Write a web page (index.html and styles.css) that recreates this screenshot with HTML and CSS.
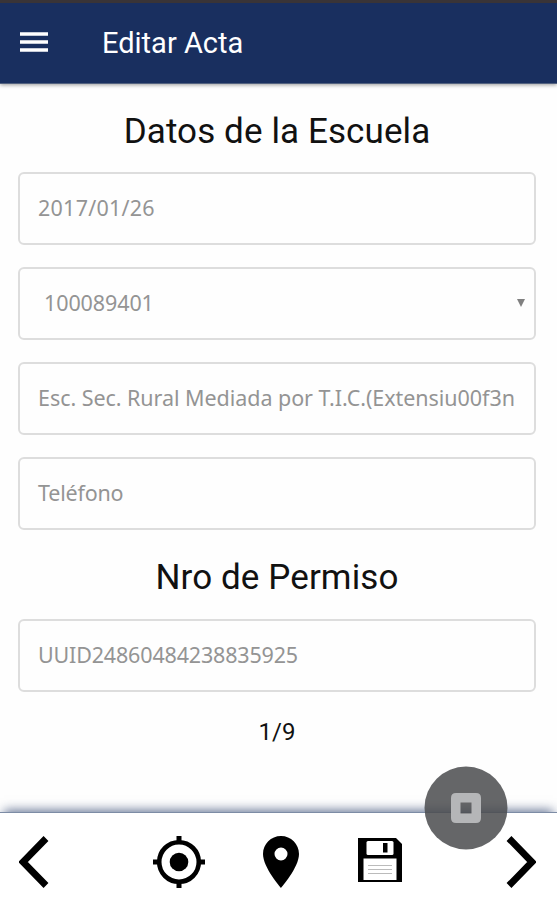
FILE: index.html
```html
<!DOCTYPE html>
<html lang="es">
<head>
<meta charset="utf-8">
<title>Editar Acta</title>
<link rel="stylesheet" href="styles.css">
</head>
<body>
<div class="app">
  <header class="topbar">
    <svg class="menu" viewBox="0 0 28 20"><path d="M0 2H28M0 10H28M0 18H28" stroke="#fff" stroke-width="3.4"/></svg>
    <h1 class="title">Editar Acta</h1>
  </header>
  <main class="form">
    <h2 class="heading">Datos de la Escuela</h2>
    <div class="field date">2017/01/26</div>
    <div class="field select"><span>100089401</span><svg class="caret" viewBox="0 0 8 8"><path d="M0 0H8L4 8Z" fill="#808080"/></svg></div>
    <div class="field school">Esc. Sec. Rural Mediada por T.I.C.(Extensiu00f3n</div>
    <div class="field phone">Teléfono</div>
    <h2 class="heading permit">Nro de Permiso</h2>
    <div class="field uuid">UUID24860484238835925</div>
    <p class="page">1/9</p>
  </main>
  <footer class="toolbar">
    <svg class="icon prev" viewBox="0 0 30 52"><path d="M27 2.5L4 26L27 49.5" fill="none" stroke="#000" stroke-width="6.8"/></svg>
    <svg class="icon target" viewBox="0 0 52 52"><circle cx="26" cy="26" r="19.8" fill="none" stroke="#000" stroke-width="4.6"/><circle cx="26" cy="26" r="9.3"/><path d="M26 0V7M26 45V52M0 26H7M45 26H52" stroke="#000" stroke-width="5"/></svg>
    <svg class="icon pin" viewBox="0 0 36 52"><path fill-rule="evenodd" d="M18 0C8 0 0 8 0 18C0 31.500 18 52 18 52S36 31.500 36 18C36 8 28 0 18 0ZM18 11.500A6.500 6.500 0 1 1 18 24.500A6.500 6.500 0 1 1 18 11.500Z"/></svg>
    <svg class="icon save" viewBox="0 0 44 44"><path d="M0 0H38L44 6V44H0Z"/><rect x="8.500" y="3" width="27" height="14" rx="1.500" fill="#fff"/><rect x="25" y="5" width="4.500" height="9.500"/><rect x="5.500" y="20.500" width="33" height="21.500" fill="#fff"/><path d="M10 27.500H34M10 31.500H34M10 35.500H34" stroke="#bbb" stroke-width="1.200"/></svg>
    <svg class="icon next" viewBox="0 0 30 52"><path d="M3 2.500L26 26L3 49.500" fill="none" stroke="#000" stroke-width="6.8"/></svg>
  </footer>
  <svg class="bubble" viewBox="0 0 84 84"><circle cx="42" cy="42" r="41.500" fill="#4a4b4d" fill-opacity=".85"/><path fill-rule="evenodd" fill="#b5b6b8" d="M32 27H52Q57 27 57 32V52Q57 57 52 57H32Q27 57 27 52V32Q27 27 32 27ZM36.500 36.500V47.500H47.500V36.500Z"/></svg>
</div>
</body>
</html>
```
FILE: styles.css
```css
* { box-sizing: border-box; }
body { margin: 0; background: #fefefe; color: #111; font-family: Roboto, sans-serif; }
.app { position: relative; width: 557px; height: 900px; display: flex; flex-direction: column; overflow: hidden; }
.topbar { height: 84px; flex: none; display: flex; align-items: center; padding: 0 20px 2px; background: #192f5f; border-top: 3px solid #393437; border-bottom: 1px solid #52617f; box-shadow: 0 1px 4px rgba(0,0,0,.4); }
.menu { width: 28px; height: 20px; margin-right: 54px; }
.title { margin: 0; font-size: 29px; font-weight: 400; line-height: 34px; color: #fff; padding-top: 1px; }
.form { flex: 1; padding: 24px 21px 0 18px; display: flex; flex-direction: column; }
.heading { margin: 0 0 16px; height: 48px; line-height: 48px; text-align: center; font-size: 35px; font-weight: 400; letter-spacing: .1px; }
.field { height: 73px; flex: none; margin-bottom: 22px; padding: 0 18px 2px; border: 2px solid #ddd; border-radius: 6px; display: flex; align-items: center; white-space: nowrap; overflow: hidden; font-family: "Noto Sans", sans-serif; font-size: 21.5px; color: #949494; }
.date { letter-spacing: .25px; }
.school { letter-spacing: -.05px; }
.phone { letter-spacing: -.2px; }
.uuid { letter-spacing: -.17px; }
.select { padding: 0 9px 2px 24px; justify-content: space-between; letter-spacing: -.1px; }
.caret { width: 8px; height: 8px; }
.permit { margin: 2px 0 17px; }
.page { margin: 4px 0 0; text-align: center; font-size: 24px; line-height: 28px; }
.toolbar { position: relative; height: 88px; flex: none; display: flex; align-items: center; padding: 10px 20px 0 19px; background: #fff; border-top: 1px solid #7d8ca5; box-shadow: 0 -6px 10px -4px rgba(25,47,95,.65); }
.icon { flex: none; }
.prev, .next { width: 30px; height: 52px; }
.target { width: 52px; height: 52px; margin-left: 104px; }
.pin { width: 36px; height: 52px; margin-left: 58px; }
.save { width: 44px; height: 44px; margin: 0 0 3px 59px; }
.next { margin-left: 104px; }
.bubble { position: absolute; left: 424px; top: 766px; width: 84px; height: 84px; }
```
